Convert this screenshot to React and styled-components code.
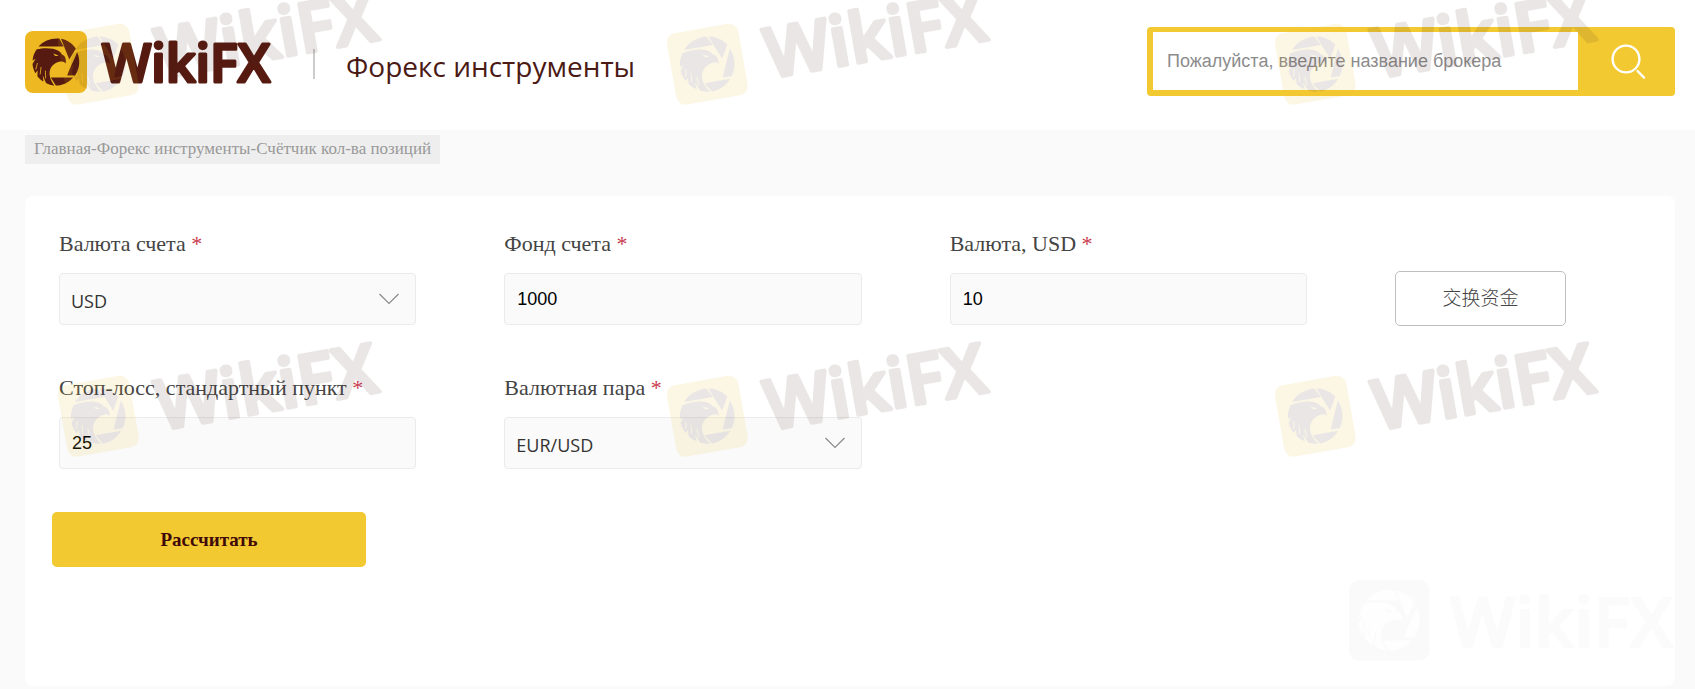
import React, { useState } from "react";
import styled, { createGlobalStyle } from "styled-components";

const GlobalStyle = createGlobalStyle`
  * {
    box-sizing: border-box;
  }

  body {
    margin: 0;
    background-color: #fafafa;
    font-family: "Liberation Serif", "Noto Sans CJK SC", serif;
    color: #444;
  }
`;

const Page = styled.div`
  position: relative;
  overflow: hidden;
  padding-bottom: 2px;
`;

const Header = styled.header`
  display: flex;
  justify-content: space-between;
  align-items: center;
  height: 130px;
  padding: 0 20px 7px 25px;
  background-color: #fff;
`;

const Brand = styled.a`
  display: flex;
  align-items: center;
  text-decoration: none;

  svg {
    display: block;
    flex: none;
    overflow: visible;
  }
`;

const BrandTitle = styled.h1`
  position: relative;
  margin: 0 0 0 40px;
  padding: 8px 0 0 33px;
  font-family: "Open Sans", sans-serif;
  font-size: 28px;
  font-weight: 400;
  line-height: 48px;
  color: #4b1a14;

  /* vertical divider before the title */
  &::before {
    content: "";
    position: absolute;
    left: 0;
    top: 15px;
    width: 2px;
    height: 30px;
    background-color: #ccc;
  }
`;

const SearchForm = styled.form`
  display: flex;
  width: 32%;
  height: 69px;
  padding: 5px 0 6px 6px;
  background-color: #f3c931;
  border-radius: 4px;
`;

const SearchInput = styled.input`
  flex: 1;
  min-width: 0;
  border: none;
  padding: 0 14px;
  background-color: #fff;
  font-family: "Liberation Sans", sans-serif;
  font-size: 18px;
  color: #333;

  &::placeholder {
    color: #8c8c8c;
    opacity: 1;
  }
`;

const SearchButton = styled.button`
  width: 97px;
  border: none;
  padding: 0 0 0 3px;
  background: none;
  color: #fff;
  cursor: pointer;

  svg {
    display: block;
    margin: 0 auto;
  }
`;

const Main = styled.main`
  padding: 5px 20px 0 25px;
`;

const Breadcrumb = styled.nav`
  display: inline-block;
  padding: 0 9px 2px;
  background-color: #eee;
  font-size: 17px;
  line-height: 27px;
  color: #999;

  a {
    color: inherit;
    text-decoration: none;
  }
`;

const Panel = styled.form`
  margin-top: 32px;
  padding: 34px 109px 119px 27px;
  border-radius: 8px;
  background-color: #fff;
`;

const FieldGrid = styled.div`
  display: grid;
  grid-template-columns: repeat(3, minmax(0, 1fr)) 171px;
  grid-auto-rows: 96px;
  gap: 48px 88px;
  align-items: start;
  padding-left: 7px;
`;

const Field = styled.div`
  label {
    display: block;
    margin-bottom: 15px;
    font-size: 22px;
    line-height: 28px;
    color: #444;
  }

  em {
    color: #c8394d;
    font-style: normal;
  }
`;

const ControlBox = styled.div`
  position: relative;

  input,
  select {
    display: block;
    width: 100%;
    height: 52px;
    padding: 0 12px;
    border: 1px solid #ebebeb;
    border-radius: 4px;
    background-color: #fafafa;
    font-family: "Liberation Sans", sans-serif;
    font-size: 18px;
    color: #000;
  }

  select {
    appearance: none;
    padding: 4px 11px 0;
    font-family: "Open Sans", sans-serif;
    color: #333;
  }

  svg {
    position: absolute;
    right: 17px;
    top: 20px;
    pointer-events: none;
  }
`;

const ExchangeButton = styled.button`
  align-self: end;
  height: 55px;
  padding-bottom: 5px;
  border: 1px solid #bfbfbf;
  border-radius: 5px;
  background-color: #fff;
  font-family: "Liberation Sans", "Noto Sans CJK SC", sans-serif;
  font-size: 19px;
  font-weight: 300;
  color: #444;
  cursor: pointer;
`;

const SubmitButton = styled.button`
  display: block;
  width: 314px;
  height: 55px;
  margin-top: 42px;
  border: none;
  border-radius: 5px;
  background-color: #f3c931;
  font-family: "Liberation Serif", serif;
  font-size: 19px;
  font-weight: 700;
  color: #3f0a0a;
  cursor: pointer;
`;

const WatermarkLayer = styled.div`
  position: absolute;
  inset: 0;
  pointer-events: none;
`;

/* placed by its tile centre, which is also the pivot of the tilt */
const Stamp = styled.svg`
  position: absolute;
  left: ${({ $left }) => $left};
  top: ${({ $top }) => $top}px;
  width: 300px;
  height: 100px;
  margin: -50px 0 0 -50px;
  overflow: visible;
  opacity: ${({ $faint }) => ($faint ? 1 : 0.11)};
  transform: rotate(${({ $faint }) => ($faint ? 0 : -10)}deg);
  transform-origin: 50px 50px;
`;

const stamps = [
  { left: "5.8%", top: 64 },
  { left: "41.7%", top: 64 },
  { left: "77.6%", top: 64 },
  { left: "5.8%", top: 416 },
  { left: "41.7%", top: 416 },
  { left: "77.6%", top: 416 },
];

// eagle inside camera-shutter blades, drawn on a 62x62 tile
const EagleTile = ({ tile, ink }) => (
  <g>
    <rect width="62" height="62" rx="8" fill={tile} />
    <g fill={ink}>
      <path d="M13.5 15.6C18.5 9.8 26 7 34.3 7.6L38.6 15.6Z" />
      <path d="M36 7.8C42.3 9 47.3 12.4 50.8 17.6L44.3 28.6Z" />
      <path d="M52.2 21.2C55.6 29 54.8 37.8 50 44.6L42.2 44.6C43.8 39.5 48.5 30 52.2 21.2Z" />
      <path d="M25.8 46.6L48.2 46.6C43.5 52 37.5 54.7 30.8 54.6Z" />
      <path d="M11.8 18.2C16.5 17.2 22.5 16.6 28 17.8C32.5 18.8 35.8 20.8 37 23.6C39.6 24.6 41.4 27 40.8 32.6C39.4 30.6 37.4 30 35 30.6C30.6 31.4 26.8 34.2 25.2 38.4C23.6 43 25 48.6 29.4 54.6C26.6 54.2 23.6 53.4 21 52L17.8 44.4L18.4 50.6C16 49.2 14 47.4 12.4 45.2L12.6 39.4L10.4 42.2C8.8 39.4 7.8 36.4 7.5 33L10.6 27.8L7.6 29.4C7.8 25.2 9.4 21.4 11.8 18.2Z" />
    </g>
    <path d="M28.4 22.4L33.4 24.4C31.6 25.6 29.4 25 28.4 22.4Z" fill={tile} />
    <path d="M12.4 32L10.8 38.6M16 36L15.2 43.4M20.4 39.6L20.6 47.4" stroke={tile} strokeWidth="0.8" />
  </g>
);

const Wordmark = ({ x, y, size, ink, outline }) => (
  <text
    x={x}
    y={y}
    fontFamily="Open Sans, sans-serif"
    fontWeight="600"
    fontSize={size}
    fill={ink}
    stroke={ink}
    strokeWidth={outline}
    strokeLinejoin="round"
  >
    WikiFX
  </text>
);

const Chevron = () => (
  <svg width="20" height="12" viewBox="0 0 20 12" fill="none" stroke="#8a8a8a" strokeWidth="1.2">
    <path d="M0.5 1L10 10.5L19.5 1" />
  </svg>
);

const FormField = ({ id, label, value, onChange, options }) => (
  <Field>
    <label htmlFor={id}>
      {label} <em>*</em>
    </label>
    <ControlBox>
      {options ? (
        <>
          <select id={id} value={value} onChange={onChange}>
            {options.map((option) => (
              <option key={option}>{option}</option>
            ))}
          </select>
          <Chevron />
        </>
      ) : (
        <input id={id} type="text" value={value} onChange={onChange} />
      )}
    </ControlBox>
  </Field>
);

const App = () => {
  const [values, setValues] = useState({
    currency: "USD",
    fund: "1000",
    amount: "10",
    stopLoss: "25",
    pair: "EUR/USD",
  });

  const bind = (name) => ({
    id: name,
    value: values[name],
    onChange: (e) => setValues({ ...values, [name]: e.target.value }),
  });

  return (
    <Page>
      <GlobalStyle />
      <Header>
        <Brand href="#">
          <svg width="248" height="62" viewBox="0 0 248 62" aria-label="WikiFX">
            <EagleTile tile="#edb821" ink="#561a10" />
            <Wordmark x={77} y={51} size={52} outline={3} ink="#561a10" />
          </svg>
          <BrandTitle>Форекс инструменты</BrandTitle>
        </Brand>
        <SearchForm onSubmit={(e) => e.preventDefault()}>
          <SearchInput type="text" aria-label="Поиск" placeholder="Пожалуйста, введите название брокера" />
          <SearchButton type="submit" aria-label="Найти">
            <svg width="36" height="36" viewBox="0 0 36 36" fill="none" stroke="#fff" strokeWidth="2.4" strokeLinecap="round">
              <circle cx="16" cy="16" r="13.4" />
              <path d="M27.6 28L34 34.6" />
            </svg>
          </SearchButton>
        </SearchForm>
      </Header>

      <Main>
        <Breadcrumb>
          <a href="#">Главная</a>-<a href="#">Форекс инструменты</a>-<a href="#">Счётчик кол-ва позиций</a>
        </Breadcrumb>

        <Panel onSubmit={(e) => e.preventDefault()}>
          <FieldGrid>
            <FormField label="Валюта счета" options={["USD", "EUR", "GBP"]} {...bind("currency")} />
            <FormField label="Фонд счета" {...bind("fund")} />
            <FormField label="Валюта, USD" {...bind("amount")} />
            <ExchangeButton type="button">交换资金</ExchangeButton>
            <FormField label="Стоп-лосс, стандартный пункт" {...bind("stopLoss")} />
            <FormField label="Валютная пара" options={["EUR/USD", "GBP/USD"]} {...bind("pair")} />
          </FieldGrid>
          <SubmitButton type="submit">Рассчитать</SubmitButton>
        </Panel>
      </Main>

      <WatermarkLayer aria-hidden="true">
        {stamps.map(({ left, top }) => (
          <Stamp key={left + top} $left={left} $top={top}>
            <g transform="translate(14 14) scale(1.17)">
              <EagleTile tile="#edb821" ink="#4a2a26" />
            </g>
            <Wordmark x={109} y={75} size={69} outline={4} ink="#4a2a26" />
          </Stamp>
        ))}
        <Stamp $left="82%" $top={620} $faint>
          <g transform="translate(9 10) scale(1.3)">
            <EagleTile tile="#fafafa" ink="#fefefe" />
          </g>
          <Wordmark x={110} y={77} size={69} outline={2} ink="#fbfbfb" />
        </Stamp>
      </WatermarkLayer>
    </Page>
  );
};

export default App;
